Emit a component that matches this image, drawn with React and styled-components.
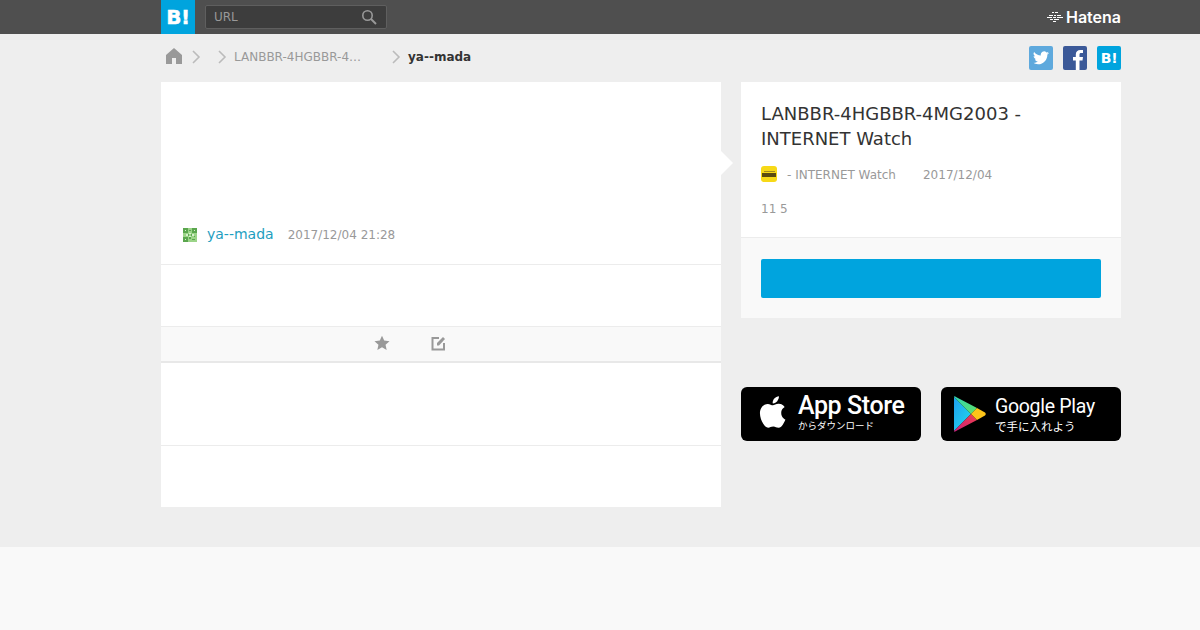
import React from "react";
import styled, { createGlobalStyle } from "styled-components";

const Global = createGlobalStyle`
  html, body { margin: 0; padding: 0; background: #eee; }
  body { font-family: "DejaVu Sans", sans-serif; overflow: hidden; }
`;
const Page = styled.div`width: 1200px; height: 630px; display: flex; flex-direction: column; overflow: hidden;`;
const Header = styled.header`height: 34px; background: #4f4f4f; flex: none;`;
const Wrap = styled.div`width: 960px; margin-left: 161px; display: flex; align-items: center;`;
const HeaderInner = styled(Wrap)`height: 34px;`;
const Logo = styled.a`
  width: 34px; height: 34px; background: #00a4de; color: #fff; font: 700 20px/34px "DejaVu Sans", sans-serif;
  text-align: center; letter-spacing: -0.5px; flex: none; -webkit-text-stroke: 0.4px #fff;
`;
const Search = styled.div`
  margin-left: 10px; width: 182px; height: 24px; box-sizing: border-box; border: 1px solid #5f5f5f; border-radius: 2px;
  background: #3d3d3d; display: flex; align-items: center; justify-content: space-between; padding: 0 9px 0 8px;
  color: #999; font-size: 12px;
`;
const HatenaBrand = styled.div`
  margin-left: auto; display: flex; align-items: center; gap: 3px; color: #fff; font: 600 16px "Inter", sans-serif;
`;
const Crumbs = styled(Wrap)`height: 48px; flex: none;`;
const Trail = styled.nav`display: flex; align-items: center; padding-bottom: 3px;`;
const HomeIcon = styled.svg`width: 16px; height: 16px; margin: 0 9px 1px 5px; flex: none;`;
const Crumb = styled.span`
  font-size: 12px; color: ${p => (p.$strong ? "#333" : "#999")}; font-weight: ${p => (p.$strong ? 700 : 400)}; white-space: nowrap;
  margin-left: 7px;
`;
const CrumbTitle = styled(Crumb)`width: 157px;`;
const Chevron = styled.svg`width: 10px; height: 14px; flex: none; margin-left: ${p => p.$ml || 0}px;`;
const Shares = styled.div`margin-left: auto; display: flex; gap: 10px;`;
const ShareBtn = styled.a`
  width: 24px; height: 24px; border-radius: 2px; background: ${p => p.$c}; color: #fff;
  display: flex; align-items: center; justify-content: center; overflow: hidden;
  font: 700 14px "DejaVu Sans", sans-serif; letter-spacing: -0.3px;
`;
const Main = styled.main`width: 960px; margin-left: 161px; display: flex; gap: 20px; align-items: flex-start; flex: none;`;
const Card = styled.section`position: relative; width: 560px; height: 425px; background: #fff; display: flex; flex-direction: column; flex: none;`;
const Notch = styled.span`
  position: absolute; right: -12px; top: 69px; width: 0; height: 0;
  border-style: solid; border-width: 12px 0 12px 12px; border-color: transparent transparent transparent #fff;
`;
const Section = styled.div`
  height: ${p => p.$h}px; flex: none; box-sizing: border-box;
  border-bottom: ${p => (p.$line ? `1px solid ${p.$line}` : "0")};
`;
const UserSection = styled(Section)`display: flex; align-items: flex-end; padding: 0 0 21px 22px;`;
const Avatar = styled.svg`width: 14px; height: 14px; flex: none; margin: 0 10px 1px 0;`;
const UserName = styled.a`font-size: 14px; line-height: 18px; color: #1e9ec0; margin-right: 14px;`;
const Stamp = styled.span`font-size: 12px; line-height: 18px; color: #999; position: relative; top: 1px;`;
const Actions = styled.div`
  height: 37px; flex: none; box-sizing: border-box; background: #f9f9f9; border-top: 1px solid #ececec; border-bottom: 2px solid #e8e8e8;
  display: flex; align-items: center; padding: 0 0 2px 213px; gap: 41px;
`;
const Side = styled.aside`width: 380px; flex: none; display: flex; flex-direction: column;`;
const Entry = styled.div`
  height: 156px; box-sizing: border-box; background: #fff; border-bottom: 1px solid #ececec; padding: 19px 20px 0;
`;
const Title = styled.h1`margin: 0; font-size: 18px; font-weight: 400; line-height: 25px; color: #333;`;
const Meta = styled.div`display: flex; align-items: center; margin-top: 14px; font-size: 12px; color: #999; height: 20px;`;
const Favicon = styled.span`
  width: 16px; height: 16px; border-radius: 3px; background: #f7d917; margin: 0 10px 3px 0; flex: none;
  display: flex; flex-direction: column; align-items: center; justify-content: center; gap: 1px;
`;
const FavBar = styled.i`display: block; width: ${p => p.$w}px; height: ${p => p.$h}px; background: ${p => p.$c};`;
const Date2 = styled.span`margin-left: 27px;`;
const Counts = styled.div`margin-top: 17px; font-size: 12px; line-height: 15px; color: #999;`;
const CtaBox = styled.div`height: 80px; background: #f9f9f9; padding: 21px 20px 20px; box-sizing: border-box;`;
const Cta = styled.a`display: block; height: 39px; background: #00a4de; border-radius: 2px;`;
const Stores = styled.div`display: flex; gap: 20px; margin-top: 69px;`;
const Badge = styled.a`
  width: 180px; height: 54px; background: #000; border-radius: 6px; color: #fff; display: flex; align-items: center; box-sizing: border-box;
  padding-left: ${p => p.$pl}px;
`;
const AppleIcon = styled.svg`width: 28px; height: 34px; margin-bottom: 4px; flex: none;`;
const PlayIcon = styled.svg`width: 32px; height: 36px; flex: none;`;
const BadgeText = styled.div`margin: 0 0 ${p => p.$mb}px ${p => p.$ml}px; display: flex; flex-direction: column;`;
const BadgeMain = styled.span`font: ${p => p.$w} ${p => p.$s}px/25px "Roboto", sans-serif; letter-spacing: ${p => p.$ls}px; white-space: nowrap;`;
const BadgeSub = styled.span`font: 400 ${p => p.$s}px/14px "Noto Sans CJK JP", sans-serif; white-space: nowrap;`;
const Footer = styled.footer`flex: 1; margin-top: 40px; background: #f9f9f9;`;

const Chev = ({ ml }) => (
  <Chevron $ml={ml} viewBox="0 0 10 14"><path d="M2 1l6 6-6 6" fill="none" stroke="#bbb" strokeWidth="1.6" /></Chevron>
);

const avatarDark = "M0 0h3v3H0zM6 0h3v3H6zM0 6h3v3H0zM4 1h1v1H4zM3 4h1v1H3zM5 4h1v1H5zM4 6h1v1H4zM7 5h1v1H7zM6 7h2v1H6z";
const avatarLight = "M1 1h1v1H1zM7 1h1v1H7zM1 7h1v1H1zM4 3h1v1H4zM4 5h1v1H4zM2 4h1v1H2zM6 4h1v1H6z";

export default function App() {
  return (
    <Page>
      <Global />
      <Header>
        <HeaderInner>
          <Logo>B!</Logo>
          <Search>
            URL
            <svg width="16" height="16" viewBox="0 0 16 16"><circle cx="6.500" cy="6.500" r="4.700" fill="none" stroke="#999" strokeWidth="1.600" /><path d="M10 10l5 5" stroke="#999" strokeWidth="2" /></svg>
          </Search>
          <HatenaBrand>
            <svg width="16" height="10" viewBox="0 0 16 10" fill="none" stroke="#fff" strokeWidth="1"><path d="M5 .5h2M8 .5h3M2 3.500h4M7 3.500h2M10 3.500h4M0 5.500h5M6 5.500h3M10 5.500h6M3 7.500h3M7 7.500h5M6 9.500h3" /></svg>
            Hatena
          </HatenaBrand>
        </HeaderInner>
      </Header>
      <Crumbs>
        <Trail>
          <HomeIcon viewBox="0 0 16 16"><path fill="#999" fillRule="evenodd" d="M8 0l8 7v9H0V7zM6 10v6h4v-6z" /></HomeIcon>
          <Chev />
          <Chev ml={16} />
          <CrumbTitle>LANBBR-4HGBBR-4…</CrumbTitle>
          <Chev />
          <Crumb $strong>ya--mada</Crumb>
        </Trail>
        <Shares>
          <ShareBtn $c="#5ea9dd">
            <svg width="16" height="14" viewBox="0 0 24 20"><path fill="#fff" d="M24 2.400a9.800 9.800 0 0 1-2.800.8A5 5 0 0 0 23.300.5a9.800 9.800 0 0 1-3.100 1.200 4.900 4.900 0 0 0-8.400 4.500A14 14 0 0 1 1.700.9a4.900 4.900 0 0 0 1.500 6.600 4.900 4.900 0 0 1-2.200-.6c0 2.400 1.700 4.400 3.900 4.900a4.900 4.900 0 0 1-2.200.1 4.900 4.900 0 0 0 4.600 3.400A9.900 9.900 0 0 1 0 17.300 14 14 0 0 0 7.500 19.500c9.100 0 14.300-7.700 14-14.600A10 10 0 0 0 24 2.400z" /></svg>
          </ShareBtn>
          <ShareBtn $c="#3b5998">
            <svg width="24" height="24" viewBox="0 0 24 24"><path fill="#fff" d="M16.500 24v-9.500h3l.5-3.500h-3.500V8.800c0-1 .3-1.700 1.800-1.700H20V4c-.4 0-1.500-.1-2.700-.1-2.700 0-4.500 1.600-4.500 4.600V11H10v3.500h2.800V24z" /></svg>
          </ShareBtn>
          <ShareBtn $c="#00a4de">B!</ShareBtn>
        </Shares>
      </Crumbs>
      <Main>
        <Card>
          <Notch />
          <UserSection $h={183} $line="#ececec">
            <Avatar viewBox="0 0 9 9" shapeRendering="crispEdges">
              <rect width="9" height="9" fill="#9bd488" />
              <path d={avatarDark} fill="#5aa64e" />
              <path d={avatarLight} fill="#d6f0cc" />
            </Avatar>
            <UserName>ya--mada</UserName>
            <Stamp>2017/12/04 21:28</Stamp>
          </UserSection>
          <Section $h={61} />
          <Actions>
            <svg width="16" height="16" viewBox="0 0 24 24"><path fill="#999" d="M12 1l3.300 7.400 8 .8-6 5.400 1.700 7.900L12 18.500l-7 4 1.700-7.900-6-5.400 8-.8z" /></svg>
            <svg width="15" height="15" viewBox="0 0 15 15" fill="none"><path d="M8 2H1.500v11.500H13V7" stroke="#999" strokeWidth="2" /><path d="M6 9.500V7l6-6 2 2-6 6.500z" fill="#999" /></svg>
          </Actions>
          <Section $h={83} $line="#ececec" />
          <Section $h={61} />
        </Card>
        <Side>
          <Entry>
            <Title>LANBBR-4HGBBR-4MG2003 -<br />INTERNET Watch</Title>
            <Meta>
              <Favicon>
                <FavBar $w={11} $h={1} $c="#a08a20" />
                <FavBar $w={14} $h={4} $c="#5a4a10" />
              </Favicon>
              - INTERNET Watch
              <Date2>2017/12/04</Date2>
            </Meta>
            <Counts>11 5</Counts>
          </Entry>
          <CtaBox><Cta /></CtaBox>
          <Stores>
            <Badge $pl={17}>
              <AppleIcon viewBox="0 0 24 29"><path fill="#fff" d="M19.900 15.300c0-3.400 2.800-5 2.900-5.100-1.600-2.300-4-2.600-4.900-2.700-2.100-.2-4.100 1.300-5.100 1.300-1.100 0-2.700-1.200-4.400-1.200-2.300 0-4.400 1.300-5.600 3.400-2.400 4.100-.6 10.200 1.700 13.600 1.100 1.600 2.500 3.400 4.200 3.400 1.700-.1 2.300-1.100 4.400-1.100 2 0 2.600 1.100 4.400 1.100 1.800 0 3-1.700 4.100-3.300 1.300-1.900 1.800-3.700 1.900-3.800-.1 0-3.600-1.400-3.600-5.600zM16.500 5.200c.9-1.100 1.600-2.700 1.400-4.200-1.300.1-3 .9-3.900 2-.9 1-1.600 2.600-1.400 4.100 1.500.1 3-.8 3.900-1.900z" /></AppleIcon>
              <BadgeText $ml={12} $mb={3}>
                <BadgeMain $w={500} $s={25} $ls={-0.4}>App Store</BadgeMain>
                <BadgeSub $s={9.500}>からダウンロード</BadgeSub>
              </BadgeText>
            </Badge>
            <Badge $pl={13}>
              <PlayIcon viewBox="0 0 32 36">
                <defs>
                  <linearGradient id="pb" x1="0" y1="0" x2="1" y2="1"><stop offset="0" stopColor="#1e9ff0" /><stop offset="1" stopColor="#22dcea" /></linearGradient>
                  <linearGradient id="pg" x1="0" y1="0" x2="1" y2="1"><stop offset="0" stopColor="#2fd5b0" /><stop offset="1" stopColor="#5fe06a" /></linearGradient>
                  <linearGradient id="pr" x1="1" y1="0" x2="0" y2="1"><stop offset="0" stopColor="#f0404f" /><stop offset="1" stopColor="#c81d78" /></linearGradient>
                </defs>
                <path d="M0 1v34l17-17z" fill="url(#pb)" />
                <path d="M0 1c0-1 1-1 2 0l21 11-6 6z" fill="url(#pg)" />
                <path d="M0 35c0 1 1 1 2 0l21-11-6-6z" fill="url(#pr)" />
                <path d="M23 12l8 4.500q1.500 1.500 0 3L23 24l-6-6z" fill="#fcc419" />
              </PlayIcon>
              <BadgeText $ml={9} $mb={1}>
                <BadgeMain $w={400} $s={19.500} $ls={-0.3}>Google Play</BadgeMain>
                <BadgeSub $s={11.500}>で手に入れよう</BadgeSub>
              </BadgeText>
            </Badge>
          </Stores>
        </Side>
      </Main>
      <Footer />
    </Page>
  );
}
